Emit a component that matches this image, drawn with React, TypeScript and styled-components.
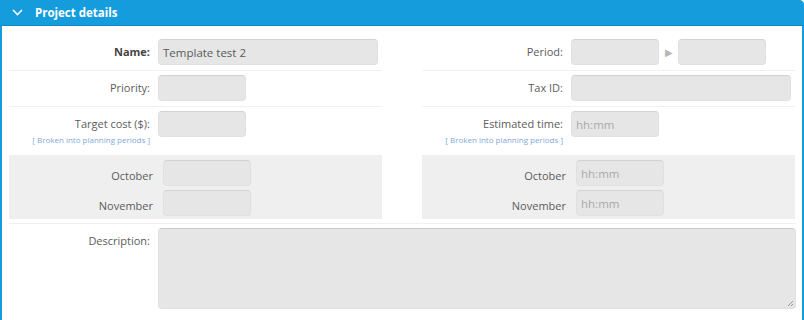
import React, { FC } from 'react'
import styled, { createGlobalStyle } from 'styled-components'

const GlobalStyle = createGlobalStyle`
  html, body {
    margin: 0;
    padding: 0;
    background: #fff;
    font-family: "Open Sans", "Liberation Sans", sans-serif;
  }
`

const Panel = styled.div`
  width: 804px;
  box-sizing: border-box;
  border-left: 2px solid #149cdc;
  border-right: 2px solid #149cdc;
  border-top-right-radius: 5px;
  background: #fff;
  height: 320px;
`

const Header = styled.div`
  display: flex;
  align-items: center;
  gap: 12px;
  height: 25px;
  margin: 0 -2px;
  padding-left: 12px;
  background: #149cdc;
  border-bottom: 1px solid #0f88c6;
  border-top-right-radius: 5px;
  color: #fff;
  font-size: 11.5px;
  font-weight: 700;
`

const Body = styled.div`
  padding: 9px 6px 0 7px;
`

const Columns = styled.div`
  display: grid;
  grid-template-columns: 373px 373px;
  column-gap: 40px;
`

const Column = styled.div`
  display: flex;
  flex-direction: column;
`

const Row = styled.div<{ $tall?: boolean }>`
  display: grid;
  grid-template-columns: 141px 1fr;
  column-gap: 8px;
  padding: 4px 4px ${p => (p.$tall ? '10px' : '5px')} 0;
  border-bottom: ${p => (p.$tall ? 'none' : '1px solid #f0f0f0')};
  align-items: start;
`

const LabelCell = styled.div`
  display: flex;
  flex-direction: column;
  align-items: flex-end;
`

const Label = styled.label<{ $bold?: boolean }>`
  line-height: 26px;
  font-size: 11px;
  color: ${p => (p.$bold ? '#444' : '#5c5c5c')};
  font-weight: ${p => (p.$bold ? 700 : 400)};
  white-space: nowrap;
`

const Note = styled.span`
  margin-top: -2px;
  line-height: 10px;
  font-size: 8px;
  color: #7ea9dc;
  white-space: nowrap;
`

const Field = styled.div<{ $w?: number }>`
  box-sizing: border-box;
  height: 26px;
  width: ${p => (p.$w ? `${p.$w}px` : '100%')};
  padding: 0 4px;
  display: flex;
  align-items: center;
  background: #e6e6e6;
  border: 1px solid #e0e0e0;
  border-top-color: #d2d2d2;
  border-radius: 4px;
  font-size: 11.5px;
  color: #5a5a5a;
`

const Placeholder = styled.span`
  color: #a9a9a9;
  font-size: 11.5px;
`

const Inline = styled.div`
  display: flex;
  align-items: center;
`

const Arrow = styled.span`
  width: 19px;
  text-align: center;
  color: #b8b8b8;
  font-size: 10px;
`

const Periods = styled.div`
  padding: 5px 0 3px;
  background: #efefef;
  display: flex;
  flex-direction: column;
  gap: 4px;
`

const PeriodRow = styled.div`
  display: grid;
  grid-template-columns: 144px 1fr;
  column-gap: 10px;
  height: 26px;
`

const PeriodLabel = styled.span`
  text-align: right;
  line-height: 26px;
  padding-top: 3px;
  font-size: 11px;
  color: #5c5c5c;
`

const Divider = styled.div`
  height: 4px;
  border-bottom: 1px solid #f0f0f0;
`

const DescRow = styled.div`
  display: grid;
  grid-template-columns: 141px 1fr;
  column-gap: 8px;
  padding-top: 4px;
`

const TextArea = styled.div`
  position: relative;
  box-sizing: border-box;
  height: 81px;
  background: #e6e6e6;
  border: 1px solid #e0e0e0;
  border-top-color: #c8c8c8;
  border-radius: 4px;
`

const Grip = styled.svg`
  position: absolute;
  right: 1px;
  bottom: 1px;
`

const Chevron: FC = () => (
  <svg width="11" height="7" viewBox="0 0 11 7">
    <path d="M1 1l4.5 4.5L10 1" stroke="#fff" strokeWidth="1.6" fill="none" />
  </svg>
)

const Hint: FC = () => <Note>[ Broken into planning periods ]</Note>

const months = ['October', 'November']

const App: FC = () => (
  <>
    <GlobalStyle />
    <Panel>
      <Header>
        <Chevron />
        <span>Project details</span>
      </Header>
      <Body>
        <Columns>
          <Column>
            <Row>
              <LabelCell><Label $bold>Name:</Label></LabelCell>
              <Field>Template test 2</Field>
            </Row>
            <Row>
              <LabelCell><Label>Priority:</Label></LabelCell>
              <Field $w={88} />
            </Row>
            <Row $tall>
              <LabelCell>
                <Label>Target cost ($):</Label>
                <Hint />
              </LabelCell>
              <Field $w={88} />
            </Row>
            <Periods>
              {months.map(m => (
                <PeriodRow key={m}>
                  <PeriodLabel>{m}</PeriodLabel>
                  <Field $w={88} />
                </PeriodRow>
              ))}
            </Periods>
          </Column>
          <Column>
            <Row>
              <LabelCell><Label>Period:</Label></LabelCell>
              <Inline>
                <Field $w={88} />
                <Arrow>▶</Arrow>
                <Field $w={88} />
              </Inline>
            </Row>
            <Row>
              <LabelCell><Label>Tax ID:</Label></LabelCell>
              <Field />
            </Row>
            <Row $tall>
              <LabelCell>
                <Label>Estimated time:</Label>
                <Hint />
              </LabelCell>
              <Field $w={88}><Placeholder>hh:mm</Placeholder></Field>
            </Row>
            <Periods>
              {months.map(m => (
                <PeriodRow key={m}>
                  <PeriodLabel>{m}</PeriodLabel>
                  <Field $w={88}><Placeholder>hh:mm</Placeholder></Field>
                </PeriodRow>
              ))}
            </Periods>
          </Column>
        </Columns>
        <Divider />
        <DescRow>
          <LabelCell><Label>Description:</Label></LabelCell>
          <TextArea>
            <Grip width="8" height="8" viewBox="0 0 8 8">
              <path d="M7 2L2 7M7 5L5 7" stroke="#999" strokeWidth="1" />
            </Grip>
          </TextArea>
        </DescRow>
      </Body>
    </Panel>
  </>
)

export default App
